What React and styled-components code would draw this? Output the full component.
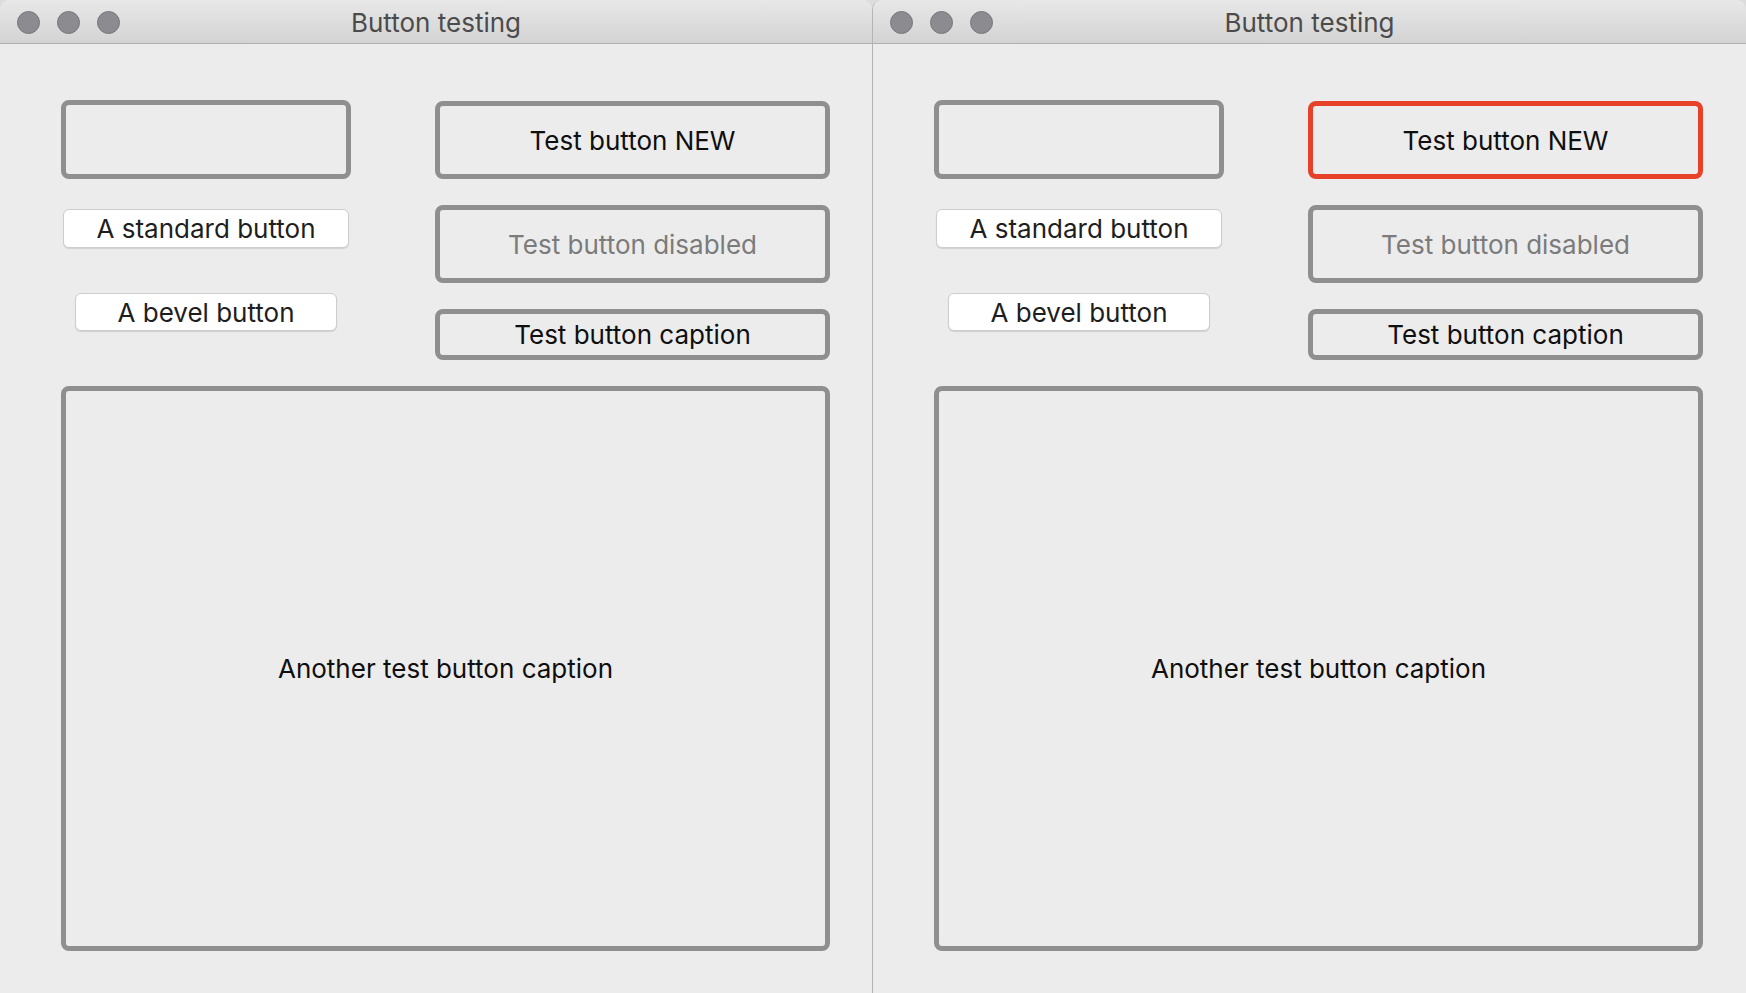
import React from 'react';
import styled, { createGlobalStyle } from 'styled-components';

const GlobalStyle = createGlobalStyle`
  html, body {
    margin: 0;
    padding: 0;
    background: #dcdcdc;
  }
  * {
    box-sizing: border-box;
  }
`;

const Desktop = styled.div`
  display: flex;
  width: 1746px;
  height: 993px;
  overflow: hidden;
  font-family: Inter, 'Liberation Sans', sans-serif;
`;

const Window = styled.div`
  flex: ${(props) => (props.second ? '1 1 auto' : '0 0 872px')};
  display: flex;
  flex-direction: column;
  background: #ececec;
  border-radius: 10px 10px 0 0;
  overflow: hidden;
  border-left: ${(props) => (props.second ? '1px solid #b4b4b4' : 'none')};
`;

const TitleBar = styled.div`
  position: relative;
  height: 44px;
  flex: 0 0 44px;
  display: flex;
  align-items: center;
  justify-content: center;
  background: linear-gradient(#e9e8e9, #d4d3d4);
  border-bottom: 1px solid #b1b1b1;
`;

const Lights = styled.div`
  position: absolute;
  left: 17px;
  top: 11px;
  display: flex;
  gap: 17px;
`;

const Light = styled.span`
  width: 23px;
  height: 23px;
  border-radius: 50%;
  background: #8c8b90;
  border: 1px solid #77767b;
`;

const Title = styled.span`
  font-size: 26px;
  color: #4b4b4b;
  margin-top: 2px;
`;

const Content = styled.div`
  flex: 1;
  padding: 56px 0 0 61px;
`;

const TopRow = styled.div`
  display: grid;
  grid-template-columns: 290px 395px;
  column-gap: 84px;
`;

const LeftColumn = styled.div`
  display: flex;
  flex-direction: column;
  align-items: center;
`;

const RightColumn = styled.div`
  display: flex;
  flex-direction: column;
  gap: 26px;
  padding-top: 1px;
`;

const FramedButton = styled.div`
  display: flex;
  align-items: center;
  justify-content: center;
  width: ${(props) => props.w || '100%'};
  height: ${(props) => props.h}px;
  border: 5px solid ${(props) => (props.active ? '#e8412a' : '#8f8f8f')};
  border-radius: 8px;
  background: #ececec;
  font-size: 26px;
  color: ${(props) => (props.disabled ? '#7b7b7b' : '#0f0f0f')};
`;

const PushButton = styled.div`
  display: flex;
  align-items: center;
  justify-content: center;
  width: ${(props) => props.w}px;
  height: ${(props) => props.h}px;
  margin-top: ${(props) => props.top}px;
  background: #ffffff;
  border: 1px solid #cdcdcd;
  border-radius: 6px;
  box-shadow: 0 1px 1px rgba(0, 0, 0, 0.12);
  font-size: 26px;
  color: #1e1e1e;
`;

const BigButton = styled(FramedButton)`
  margin-top: 26px;
  width: 769px;
`;

const ButtonWindow = ({ second, highlight }) => (
  <Window second={second}>
    <TitleBar>
      <Lights>
        <Light />
        <Light />
        <Light />
      </Lights>
      <Title>Button testing</Title>
    </TitleBar>
    <Content>
      <TopRow>
        <LeftColumn>
          <FramedButton h={79} />
          <PushButton w={286} h={39} top={30}>
            A standard button
          </PushButton>
          <PushButton w={262} h={38} top={45}>
            A bevel button
          </PushButton>
        </LeftColumn>
        <RightColumn>
          <FramedButton h={78} active={highlight}>
            Test button NEW
          </FramedButton>
          <FramedButton h={78} disabled>
            Test button disabled
          </FramedButton>
          <FramedButton h={51}>Test button caption</FramedButton>
        </RightColumn>
      </TopRow>
      <BigButton h={565}>Another test button caption</BigButton>
    </Content>
  </Window>
);

const App = () => (
  <>
    <GlobalStyle />
    <Desktop>
      <ButtonWindow />
      <ButtonWindow second highlight />
    </Desktop>
  </>
);

export default App;
